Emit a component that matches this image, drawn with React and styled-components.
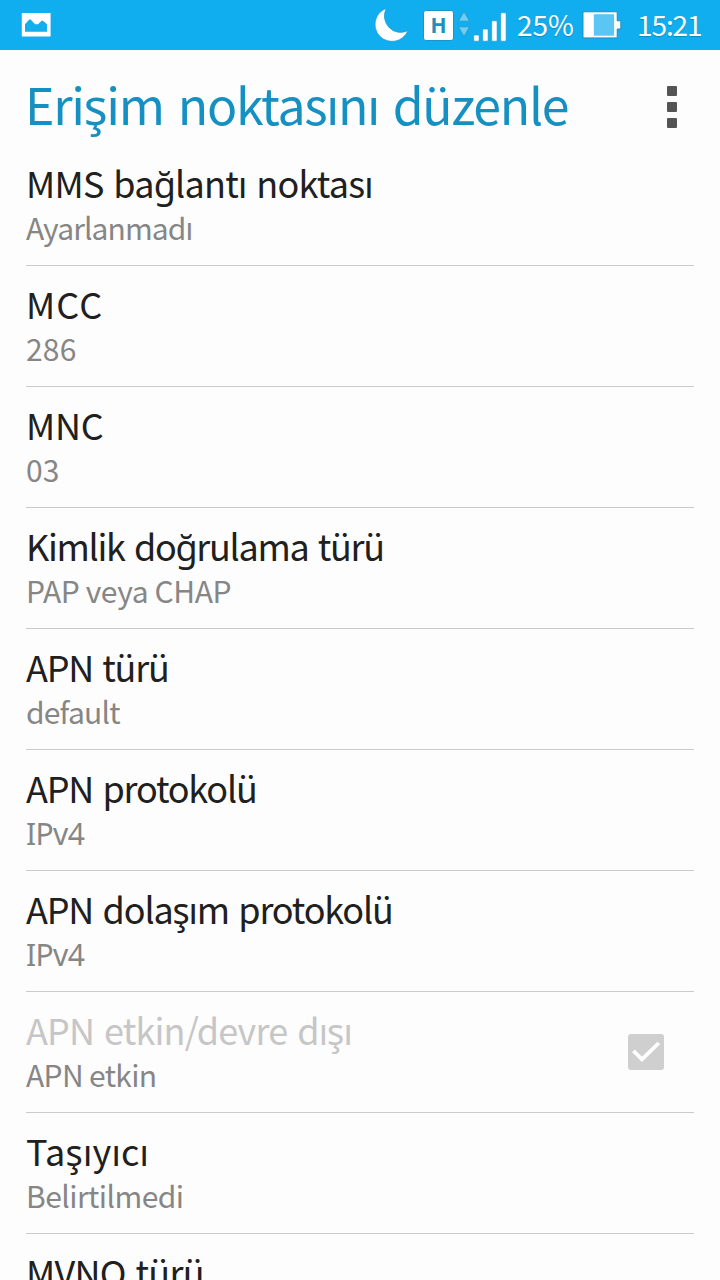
import React, { useState } from "react";
import styled, { createGlobalStyle } from "styled-components";

const settings = [
  { title: "MMS bağlantı noktası", summary: "Ayarlanmadı", titleSpacing: -0.78, summarySpacing: -0.9 },
  { title: "MCC", summary: "286", titleSpacing: 1.1, summarySpacing: 0.2 },
  { title: "MNC", summary: "03", titleSpacing: -0.3 },
  { title: "Kimlik doğrulama türü", summary: "PAP veya CHAP", titleSpacing: -1.3, summarySpacing: -0.4 },
  { title: "APN türü", summary: "default", titleSpacing: -1.25, summarySpacing: -0.8 },
  { title: "APN protokolü", summary: "IPv4", titleSpacing: -1.2, summarySpacing: -0.6, latin: true },
  { title: "APN dolaşım protokolü", summary: "IPv4", titleSpacing: -1.17, summarySpacing: -0.6, latin: true },
  {
    title: "APN etkin/devre dışı",
    summary: "APN etkin",
    titleSpacing: -0.82,
    summarySpacing: -0.65,
    disabled: true,
    checkbox: true,
  },
  { title: "Taşıyıcı", summary: "Belirtilmedi", titleSpacing: 0.25, summarySpacing: -0.55 },
  { title: "MVNO türü", titleSpacing: -0.75 },
];

function PictureIcon() {
  return (
    <StatusIcon width="32" height="50" viewBox="0 0 32 50">
      <rect x="1.8" y="13" width="28.8" height="23.4" rx="0.6" fill="#fff" />
      <path
        d="M5 31.8V24.2L9.3 19.4H10.7L15 24.2H18L21.6 20.8H23L27 24.2V31.8Z"
        fill="#13aeee"
      />
    </StatusIcon>
  );
}

function MoonIcon() {
  return (
    <StatusIcon width="36" height="50" viewBox="0 0 36 50">
      <path
        d="M12.2 8.4A17 17 0 1 0 33.8 30.8A16.4 16.4 0 0 1 12.2 8.4Z"
        fill="#fff"
        stroke="#1b94c8"
        strokeWidth="0.6"
        strokeLinejoin="round"
      />
    </StatusIcon>
  );
}

function DataArrows() {
  return (
    <StatusIcon width="15" height="50" viewBox="0 0 15 50">
      <g fill="#72cdf4" stroke="#2194c5" strokeWidth="0.8" strokeLinejoin="round">
        <path d="M7 11.6L12.6 21.2H1.4Z" />
        <path d="M7 36.6L12.6 26.8H1.4Z" />
      </g>
    </StatusIcon>
  );
}

function SignalIcon() {
  const bars = [35, 29, 20.8, 12.8];
  return (
    <StatusIcon width="36" height="50" viewBox="0 0 36 50">
      {bars.map((top, i) => (
        <rect
          key={top}
          x={1.7 + i * 9}
          y={top}
          width="5.4"
          height={41.2 - top}
          rx="1"
          fill="#fff"
          stroke="#1b94c8"
          strokeWidth="0.6"
        />
      ))}
    </StatusIcon>
  );
}

function BatteryIcon() {
  return (
    <StatusIcon width="42" height="50" viewBox="0 0 42 50">
      <path
        d="M2 11.8H36.2V20.8H39.8V29H36.2V37.9H2Z"
        fill="#fff"
        stroke="#1b87b5"
        strokeWidth="0.9"
      />
      <rect x="12.8" y="14.2" width="20.3" height="21.5" fill="#5bc6f4" />
    </StatusIcon>
  );
}

function App() {
  const [checked] = useState(true);

  return (
    <Screen>
      <GlobalStyle />
      <StatusBar>
        <PictureIcon />
        <StatusGroup>
          <MoonIcon />
          <NetworkBadge>H</NetworkBadge>
          <DataArrows />
          <SignalIcon />
          <BatteryLevel>25%</BatteryLevel>
          <BatteryIcon />
          <Clock>15:21</Clock>
        </StatusGroup>
      </StatusBar>

      <Header>
        <h1>Erişim noktasını düzenle</h1>
        <MenuButton type="button" aria-label="Menü">
          <Dot />
          <Dot />
          <Dot />
        </MenuButton>
      </Header>

      <List>
        {settings.map((item) => (
          <Row key={item.title}>
            <Labels>
              <Title $spacing={item.titleSpacing} $disabled={item.disabled}>
                {item.title}
              </Title>
              <Summary $spacing={item.summarySpacing}>
                {item.latin ? <Latin>{item.summary}</Latin> : item.summary}
              </Summary>
            </Labels>
            {item.checkbox && (
              <Checkbox>
                {checked && (
                  <svg width="36" height="36" viewBox="0 0 36 36">
                    <path
                      d="M5.4 16.8L14 25.3L30.8 9"
                      fill="none"
                      stroke="#fff"
                      strokeWidth="3.8"
                    />
                  </svg>
                )}
              </Checkbox>
            )}
          </Row>
        ))}
      </List>
    </Screen>
  );
}

export default App;

// ─── Styled Components ────────────────────────────────────────────────────────

const GlobalStyle = createGlobalStyle`
  * {
    box-sizing: border-box;
  }

  body {
    margin: 0;
    background: #fdfdfd;
    font-family: "Noto Sans CJK SC", "Noto Sans", sans-serif;
  }
`;

const Screen = styled.div`
  width: 720px;
  height: 1280px;
  overflow: hidden;
  background: #fdfdfd;
`;

const StatusBar = styled.div`
  display: flex;
  justify-content: space-between;
  align-items: center;
  height: 50px;
  padding: 0 17px 0 20px;
  background: #11aeef;
  color: #fff;
`;

const StatusGroup = styled.div`
  display: flex;
  align-items: center;
`;

const StatusIcon = styled.svg`
  display: block;
  flex: none;
`;

const NetworkBadge = styled.span`
  display: flex;
  align-items: center;
  justify-content: center;
  width: 31px;
  height: 31px;
  margin: 0 3px 0 13px;
  border: 1px solid #1b94c8;
  border-radius: 3px;
  background: #fff;
  color: #1e90bb;
  font-family: "Noto Sans", sans-serif;
  font-size: 21px;
  font-weight: 700;
  line-height: 29px;
`;

const StatusText = styled.span`
  padding-bottom: 2px;
  font-size: 28px;
  line-height: 48px;
  white-space: nowrap;
  text-shadow: 0 1px 1px rgba(0, 80, 120, 0.4);
`;

const BatteryLevel = styled(StatusText)`
  width: 56px;
  margin: 0 8px 0 9px;
`;

const Clock = styled(StatusText)`
  width: 66px;
  margin-left: 14px;
  letter-spacing: -1.1px;
`;

const Header = styled.div`
  display: flex;
  justify-content: space-between;
  align-items: flex-start;
  height: 95px;
  padding: 20px 43px 0 25px;

  h1 {
    margin: 0;
    font-size: 50px;
    font-weight: 400;
    line-height: 66px;
    letter-spacing: -1.3px;
    word-spacing: 4px;
    color: #1590c3;
    white-space: nowrap;
  }
`;

const MenuButton = styled.button`
  display: flex;
  flex-direction: column;
  gap: 6px;
  margin: 16px 0 0;
  padding: 0;
  border: none;
  background: none;
  cursor: pointer;
`;

const Dot = styled.span`
  width: 10px;
  height: 10px;
  border-radius: 1px;
  background: #545454;
`;

const List = styled.div`
  padding: 0 26px;
`;

const Row = styled.div`
  display: flex;
  justify-content: space-between;
  align-items: center;
  height: 121px;
  padding-right: 30px;
  border-bottom: 1px solid #cbcbcb;
`;

const Labels = styled.div`
  padding: 1px 0 4px;
`;

const Title = styled.div`
  font-size: 36px;
  line-height: 44px;
  letter-spacing: ${({ $spacing }) => $spacing || 0}px;
  word-spacing: 2.5px;
  color: ${({ $disabled }) => ($disabled ? "#c6c6c6" : "#202020")};
  white-space: nowrap;
`;

const Summary = styled.div`
  height: 40px;
  margin-top: 3px;
  font-size: 30px;
  line-height: 40px;
  letter-spacing: ${({ $spacing }) => $spacing || 0}px;
  color: #868686;
  white-space: nowrap;
`;

const Latin = styled.span`
  font-family: "Noto Sans", sans-serif;
  line-height: 1;
`;

const Checkbox = styled.div`
  width: 36px;
  height: 36px;
  border-radius: 3px;
  background: #cfcfcf;
`;
